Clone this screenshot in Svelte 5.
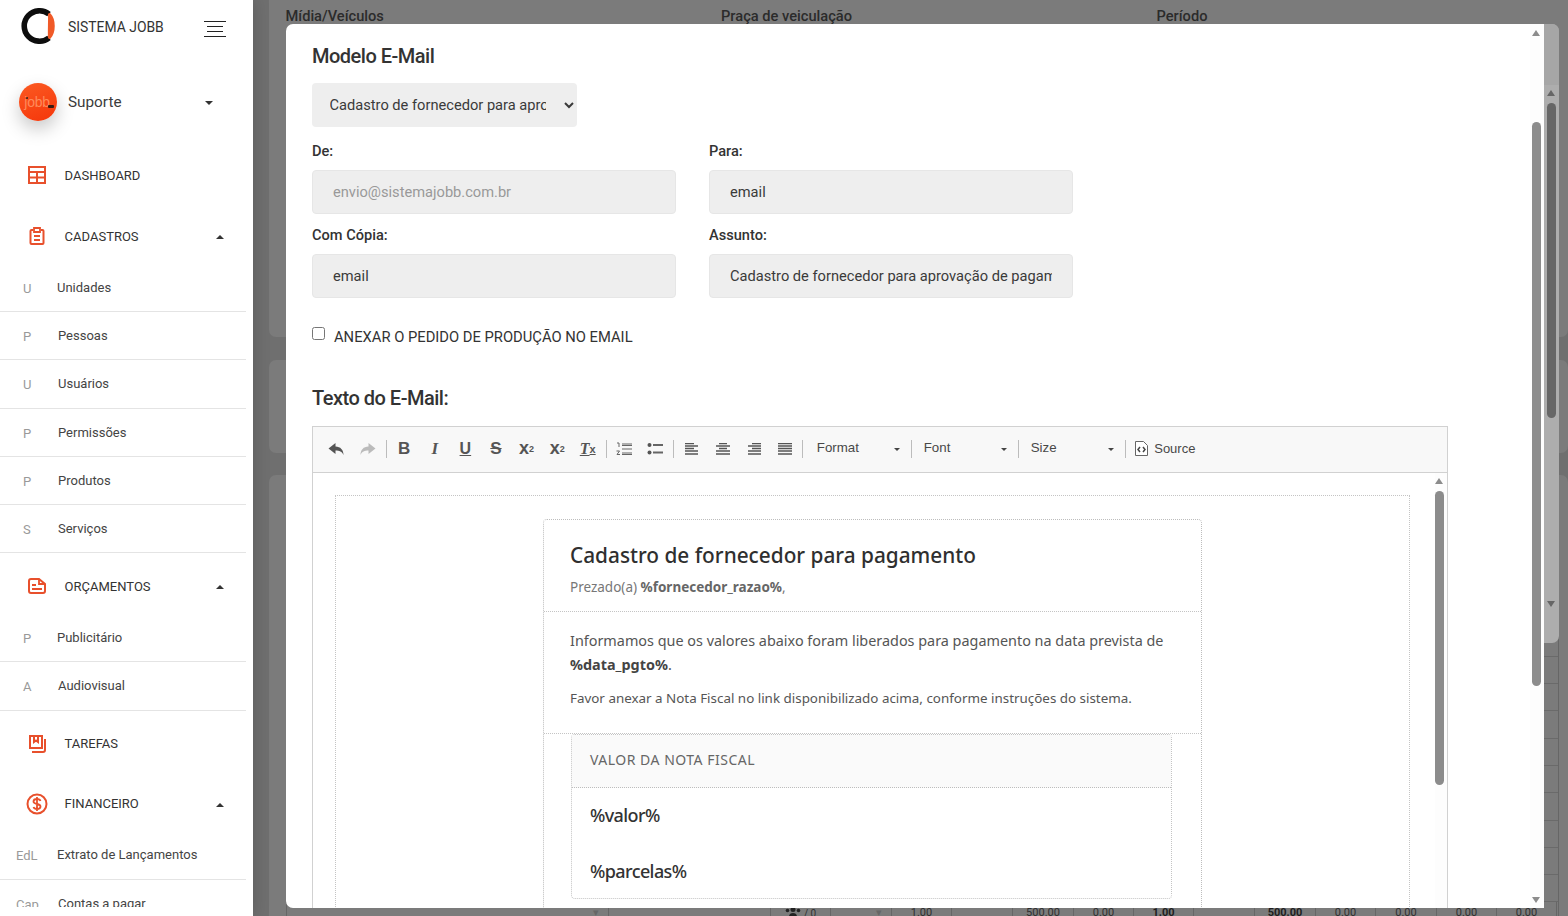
<script>
  const cadastros = [['U','Unidades',57],['P','Pessoas',58],['U','Usuários',58],['P','Permissões',58],['P','Produtos',58],['S','Serviços',58]];
  const tableRows = Array.from({ length: 15 });
  const lastCells = [
    ['▾', 322], ['', 162], ['👥', 60], ['▾', 61], ['1.00', 60], ['', 61], ['500.00', 61], ['0.00', 60], ['1.00', 60], ['', 61], ['500.00', 61], ['0.00', 60], ['0.00', 61], ['0.00', 60], ['0.00', 60]
  ];
</script>

<div class="stage">
  <aside class="sidebar">
    <div class="brand">
      <svg class="logo" viewBox="0 0 36 36" width="36" height="36">
        <path d="M29 6.2A15.2 15.2 0 1 0 29 29.8" fill="none" stroke="#0d0d0d" stroke-width="5.6"/>
        <path d="M29.5 6.5C34.5 12 34.5 24 29.5 29.5C29 24 29.8 12 29.5 6.5Z" fill="#f05a28" stroke="#f05a28" stroke-width="3" stroke-linejoin="round"/>
      </svg>
      <span class="brand-name">SISTEMA JOBB</span>
      <svg class="burger" viewBox="0 0 22 16" width="22" height="16">
        <path d="M0 .5h22M3 5.5h16M3 10.5h16M0 15.5h22" stroke="#222" stroke-width="1"/>
      </svg>
    </div>

    <div class="user">
      <div class="avatar"><i></i><span>jobb</span><b></b></div>
      <span class="user-name">Suporte</span>
      <span class="caret down user-caret"></span>
    </div>

    <nav>
      <div class="head">
        <svg viewBox="0 0 18 18" width="18" height="18"><path d="M1 1h16v16H1zM1 6h16M1 11.5h16M9 6v11" fill="none" stroke="#e8502c" stroke-width="2"/></svg>
        <span>DASHBOARD</span>
      </div>
      <div class="head">
        <svg viewBox="0 0 18 18" width="18" height="18"><path d="M5 3H3.500A1 1 0 0 0 2.500 4v12a1 1 0 0 0 1 1h11a1 1 0 0 0 1-1V4a1 1 0 0 0-1-1H13" fill="none" stroke="#e8502c" stroke-width="2"/><path d="M6 1h6v4H6zM6 9h6M6 13h6" fill="none" stroke="#e8502c" stroke-width="1.800"/></svg>
        <span>CADASTROS</span><span class="caret up"></span>
      </div>
      {#each cadastros as [l, name, x], i}
        <div class="sub" class:lead={i === 0}><em>{l}</em><span class:alt={x === 58}>{name}</span></div>
      {/each}
      <div class="head after">
        <svg viewBox="0 0 18 18" width="18" height="18"><path d="M1 4a2 2 0 0 1 2-2h8l6 5v7a2 2 0 0 1-2 2H3a2 2 0 0 1-2-2z" fill="none" stroke="#e8502c" stroke-width="2"/><path d="M11 2v5h6M4 8h4M4 12h10" fill="none" stroke="#e8502c" stroke-width="1.800"/></svg>
        <span>ORÇAMENTOS</span><span class="caret up"></span>
      </div>
      <div class="sub lead"><em>P</em><span>Publicitário</span></div>
      <div class="sub"><em>A</em><span class="alt">Audiovisual</span></div>
      <div class="head after">
        <svg viewBox="0 0 18 18" width="18" height="18"><path d="M2 1h12v12H2zM6 1v6l2-1.500L10 7V1" fill="none" stroke="#e8502c" stroke-width="2"/><path d="M17 4v11a2 2 0 0 1-2 2H4" fill="none" stroke="#e8502c" stroke-width="2"/></svg>
        <span>TAREFAS</span>
      </div>
      <div class="head fin">
        <svg viewBox="0 0 22 22" width="22" height="22"><circle cx="11" cy="11" r="9.500" fill="none" stroke="#e8502c" stroke-width="2"/><path d="M14.500 8c-.5-1.500-2-2-3.500-2s-3.500.8-3.500 2.500c0 3.500 7 1.500 7 5 0 1.700-2 2.500-3.500 2.500s-3-.6-3.500-2M11 4v14" fill="none" stroke="#e8502c" stroke-width="1.800"/></svg>
        <span>FINANCEIRO</span><span class="caret up"></span>
      </div>
      <div class="sub tall"><em class="wide">EdL</em><span>Extrato de Lançamentos</span></div>
      <div class="sub"><em class="wide">Cap</em><span class="alt">Contas a pagar</span></div>
    </nav>
  </aside>

  <main class="main">
    <section class="card first">
      <div class="col-heads"><span>Mídia/Veículos</span><span>Praça de veiculação</span><span>Período</span></div>
    </section>
    <section class="card second"></section>
    <section class="card third">
      <div class="table">
        {#each tableRows as _}<div class="row"></div>{/each}
        <div class="row last">
          {#each lastCells as [text, w], i}
            <div class="cell" class:strong={i === 8 || i === 10} class:faint={text === '▾'} style="width:{w}px">{text === '👥' ? '' : text}{#if text === '👥'}<svg viewBox="0 0 16 10" width="16" height="10"><circle cx="8" cy="2.500" r="2.500" fill="#222"/><circle cx="2.500" cy="3.500" r="1.800" fill="#222"/><circle cx="13.500" cy="3.500" r="1.800" fill="#222"/><path d="M4 10a4 4 0 0 1 8 0z" fill="#222"/></svg><small>/ 0</small>{/if}</div>
          {/each}
        </div>
      </div>
    </section>

    <div class="outer-bar">
      <span class="seg"></span>
      <span class="tri up-tri"></span>
      <span class="thumb"></span>
      <span class="tri down-tri"></span>
    </div>

    <div class="modal">
      <div class="modal-body">
        <h2>Modelo E-Mail</h2>
        <select class="field tpl">
          <option>Cadastro de fornecedor para aprovação de pagamento</option>
        </select>
        <div class="grid">
          <label>De:<input class="field" placeholder="envio@sistemajobb.com.br" /></label>
          <label>Para:<input class="field" value="email" /></label>
          <label>Com Cópia:<input class="field" value="email" /></label>
          <label>Assunto:<input class="field" value="Cadastro de fornecedor para aprovação de pagamento" /></label>
        </div>
        <label class="check"><input type="checkbox" /><span>ANEXAR O PEDIDO DE PRODUÇÃO NO EMAIL</span></label>
        <h2 class="txt">Texto do E-Mail:</h2>

        <div class="editor">
          <div class="toolbar">
            <button class="tb"><svg viewBox="0 0 16 14" width="17" height="14"><path d="M7 1 0 6.500 7 12V8.500c4 0 6.500 1 8 4.500 0-5-3-8.500-8-8.500z" fill="#555"/></svg></button>
            <button class="tb"><svg viewBox="0 0 16 14" width="17" height="14"><path d="M9 1l7 5.500L9 12V8.500c-4 0-6.500 1-8 4.500 0-5 3-8.500 8-8.500z" fill="#bbb"/></svg></button>
            <i class="sep"></i>
            <button class="tb b">B</button>
            <button class="tb it">I</button>
            <button class="tb un">U</button>
            <button class="tb st">S</button>
            <button class="tb sc">x<sub>2</sub></button>
            <button class="tb sc">x<sup>2</sup></button>
            <button class="tb cl">T<sub>x</sub></button>
            <i class="sep"></i>
            <button class="tb"><svg viewBox="0 0 16 14" width="16" height="14"><path d="M6 2h10M6 3.500h10M6 7h10M6 11h10M6 12.500h10" stroke="#666" stroke-width="1"/><path d="M1 1h2v4M0.500 9h3L1 12.500h3" fill="none" stroke="#666" stroke-width="1"/></svg></button>
            <button class="tb"><svg viewBox="0 0 16 14" width="16" height="14"><circle cx="2.500" cy="3" r="2" fill="#555"/><circle cx="2.500" cy="10.500" r="2" fill="#555"/><path d="M6 2h10v2H6zM6 9.500h10v2H6z" fill="#666"/></svg></button>
            <i class="sep"></i>
            <button class="tb al"><svg viewBox="0 0 14 12" width="14" height="12"><path d="M0 .5h9M0 3h13M0 5.500h9M0 8h13M0 11h13" stroke="#555" stroke-width="1.600"/></svg></button>
            <button class="tb al"><svg viewBox="0 0 14 12" width="14" height="12"><path d="M3 .5h8M0 3h14M3 5.500h8M0 8h14M0 11h14" stroke="#555" stroke-width="1.600"/></svg></button>
            <button class="tb al"><svg viewBox="0 0 14 12" width="14" height="12"><path d="M5 .5h9M1 3h13M5 5.500h9M1 8h13M1 11h13" stroke="#555" stroke-width="1.600"/></svg></button>
            <button class="tb al"><svg viewBox="0 0 14 12" width="14" height="12"><path d="M0 .5h14M0 3h14M0 5.500h14M0 8h14M0 11h14" stroke="#555" stroke-width="1.600"/></svg></button>
            <i class="sep nudge"></i>
            <div class="combo wide-combo"><span>Format</span><u></u></div>
            <i class="sep"></i>
            <div class="combo"><span>Font</span><u></u></div>
            <i class="sep"></i>
            <div class="combo"><span>Size</span><u></u></div>
            <i class="sep"></i>
            <div class="source">
              <svg viewBox="0 0 13 15" width="13" height="15"><path d="M.5.500h8l4 4v10H.500z" fill="#fff" stroke="#666"/><path d="M5 6 3 8.500 5 11M8 6l2 2.500L8 11" fill="none" stroke="#444" stroke-width="1.500"/></svg>
              <span>Source</span>
            </div>
          </div>

          <div class="doc">
            <div class="outer-table">
              <div class="mail-card">
                <div class="mail-head">
                  <h3>Cadastro de fornecedor para pagamento</h3>
                  <p>Prezado(a) <b>%fornecedor_razao%</b>,</p>
                </div>
                <div class="mail-body">
                  <p class="big">Informamos que os valores abaixo foram liberados para pagamento na data prevista de <b>%data_pgto%</b>.</p>
                  <p class="small">Favor anexar a Nota Fiscal no link disponibilizado acima, conforme instruções do sistema.</p>
                </div>
                <div class="mail-table">
                  <div class="mt-head">VALOR DA NOTA FISCAL</div>
                  <div class="mt-val first-val">%valor%</div>
                  <div class="mt-val">%parcelas%</div>
                </div>
              </div>
            </div>
            <div class="doc-bar"><span class="tri up-tri g"></span><span class="thumb g"></span></div>
          </div>
        </div>
      </div>
      <div class="modal-bar"><span class="tri up-tri g"></span><span class="thumb g"></span><span class="tri down-tri g"></span></div>
    </div>
  </main>
</div>

<style>
  :global(body) { margin: 0; overflow: hidden; background: #6f6f6f; }
  * { box-sizing: border-box; }
  .stage { display: flex; width: 1568px; height: 916px; overflow: hidden; font-family: Roboto, "Liberation Sans", sans-serif; color: #333; }

  .sidebar { width: 253px; height: 916px; flex: none; background: #fff; position: relative; z-index: 2; box-shadow: 0 0 16px rgba(0,0,0,.18); }
  .brand { display: flex; align-items: center; height: 52px; padding-left: 20px; }
  .logo { flex: none; }
  .brand-name { font-size: 13.900px; margin-left: 12px; color: #333; position: relative; top: 1px; }
  .burger { margin-left: 40px; position: relative; top: 3px; }
  .user { display: flex; align-items: center; height: 38px; margin-top: 31px; padding-left: 19px; }
  .avatar { width: 38px; height: 38px; flex: none; border-radius: 50%; background: linear-gradient(160deg, #fb5a22, #f5360a); box-shadow: 0 8px 18px rgba(0,0,0,.22); position: relative; display: flex; align-items: center; justify-content: center; }
  .avatar span { color: #ff8a5a; font-size: 14px; font-weight: 500; letter-spacing: -.3px; font-family: "Liberation Sans", sans-serif; position: relative; left: -1px; }
  .avatar i { position: absolute; left: 7px; top: 14px; width: 2px; height: 2px; background: #222; border-radius: 50%; }
  .avatar b { position: absolute; right: 3px; top: 22px; width: 6px; height: 3px; background: #3a1a10; border-radius: 1px; }
  .user-name { font-size: 15.300px; margin-left: 11px; color: #3c3c3c; }
  .caret { width: 0; height: 0; border-left: 4px solid transparent; border-right: 4px solid transparent; }
  .caret.down { border-top: 4px solid #333; }
  .caret.up { border-bottom: 4px solid #333; position: absolute; left: 216px; margin-top: 2px; }
  .user-caret { margin-left: 83px; margin-top: 2px; }

  nav { height: 762px; margin-top: 24px; overflow: hidden; }
  .head { display: flex; align-items: center; height: 54px; margin-top: 7px; padding-left: 28px; font-size: 13px; color: #333; position: relative; }
  .head:first-child { margin-top: 3px; }
  .head.after { margin-top: 6px; }
  .head svg { flex: none; }
  .head > span:first-of-type { margin-left: 18.600px; }
  .fin { padding-left: 26px; margin-top: 6px; }
  .fin > span:first-of-type { margin-left: 16.600px; }
  .sub { height: 48.2px; display: flex; align-items: center; border-bottom: 1px solid #e4e4e4; margin-right: 7px; font-size: 13px; color: #444; position: relative; padding-left: 57px; }
  .sub.lead { margin-top: 1px; }
  .sub.tall { height: 49.2px; }
  .sub em { position: absolute; left: 23px; top: 17px; font-style: normal; color: #999; font-size: 13px; }
  .sub em.wide { left: 16px; }
  .sub .alt { margin-left: 1px; }

  .main { position: relative; flex: 1; height: 916px; background: #6f6f6f; overflow: hidden; }
  .card { background: #7b7b7b; margin-left: 16px; border-radius: 7px; }
  .first { height: 337px; border-radius: 0 0 7px 7px; }
  .second { height: 93px; margin-top: 23px; }
  .third { height: 480px; margin-top: 22px; padding-top: 18px; padding-left: 17px; }
  .col-heads { display: flex; padding: 8px 0 0 16.500px; font-size: 14.650px; font-weight: 500; color: #2b2b2b; line-height: 16px; }
  .col-heads span { width: 435.500px; flex: none; }
  .table { width: 1273px; border-left: 1px solid #666; border-right: 1px solid #666; }
  .row { height: 27.3px; border-bottom: 1px solid #6a6a6a; }
  .row.last { display: flex; border: 0; }
  .cell { flex: none; height: 27px; border-right: 1px solid #666; font-size: 11px; color: #2f2f2f; text-align: center; padding-top: 5px; line-height: 12px; }
  .cell small { font-size: 10px; margin-left: 3px; }
  .cell.strong { font-weight: 700; color: #1e1e1e; }
  .cell.faint { color: #666; text-align: right; padding-right: 9px; }

  .outer-bar { position: absolute; left: 1291px; top: 24px; width: 15px; height: 619px; background: #adadad; border-radius: 0 7px 7px 0; z-index: 1; display: block; }
  .outer-bar .seg { position: absolute; inset: 0 0 auto 0; height: 61px; background: #a6a6a6; border-top-right-radius: 7px; }
  .outer-bar .tri { position: absolute; left: 3px; }
  .outer-bar .up-tri { top: 66px; }
  .outer-bar .down-tri { top: 577px; }
  .outer-bar .thumb { position: absolute; left: 3px; top: 79px; width: 9px; height: 315px; border-radius: 5px; background: #666; }
  .tri { width: 0; height: 0; border-left: 4.500px solid transparent; border-right: 4.500px solid transparent; }
  .up-tri { border-bottom: 6px solid #666; }
  .down-tri { border-top: 6px solid #666; }
  .up-tri.g { border-bottom-color: #8c8c8c; }
  .down-tri.g { border-top-color: #8c8c8c; }
  .thumb.g { background: #8c8c8c; }

  .modal { position: absolute; left: 33px; top: 24px; width: 1258px; height: 884px; background: #fff; border-radius: 7px 0 0 7px; overflow: hidden; z-index: 2; }
  .modal-body { padding: 20px 0 0 26px; width: 1244px; }
  .modal-bar { position: absolute; right: 0; top: 0; width: 14px; height: 884px; background: #fdfdfd; }
  .modal-bar .tri { position: absolute; left: 2px; }
  .modal-bar .up-tri { top: 6px; }
  .modal-bar .thumb { position: absolute; left: 2px; top: 98px; width: 9px; height: 564px; border-radius: 5px; }
  .modal-bar .down-tri { top: 873px; }

  h2 { margin: 0; font-size: 20px; font-weight: 500; line-height: 24px; color: #333; letter-spacing: -.5px; }
  .field { display: block; height: 44px; border: 1px solid #e6e6e6; border-radius: 4px; background: #eee; font: 400 14.650px Roboto, sans-serif; color: #3a3a3a; padding: 0 20px; width: 364px; outline: 0; }
  .field::placeholder { color: #999; opacity: 1; }
  .tpl { width: 265px; margin-top: 15px; padding: 0 15px 0 13.500px; border: 0; }
  .grid { display: grid; grid-template-columns: 364px 364px; column-gap: 33px; row-gap: 12px; margin-top: 15px; }
  .grid label { display: block; font-size: 14.600px; font-weight: 500; line-height: 18px; color: #333; }
  .grid .field { margin-top: 10px; font-weight: 400; }
  .check { display: flex; align-items: flex-start; margin-top: 29px; font-size: 14.750px; line-height: 18px; color: #333; }
  .check input { margin: 0 9px 0 0; width: 13px; height: 13px; }
  .check span { position: relative; top: 1px; }
  .txt { margin-top: 41px; }

  .editor { width: 1136px; margin-top: 16px; border: 1px solid #d1d1d1; border-bottom: 0; }
  .toolbar { height: 46px; background: #f8f8f8; border-bottom: 1px solid #d1d1d1; display: flex; align-items: center; padding: 0 0 2px 8.700px; }
  .tb { flex: none; width: 30.600px; height: 30px; border: 0; background: none; padding: 0; display: flex; align-items: center; justify-content: center; font-family: "Liberation Sans", sans-serif; color: #555; }
  .tb.al { width: 31px; }
  .b { font-weight: 700; font-size: 17px; }
  .it { font: italic 700 17px "Liberation Serif", serif; }
  .un { font-weight: 700; font-size: 16px; text-decoration: underline; }
  .st { font-weight: 700; font-size: 17px; text-decoration: line-through; }
  .sc { font-weight: 700; font-size: 18px; }
  .sc sub, .sc sup { font-size: 9px; line-height: 0; }
  .cl { font: italic 700 16px "Liberation Serif", serif; text-decoration: underline; }
  .cl sub { font: 700 11px "Liberation Sans", sans-serif; line-height: 0; }
  .sep { flex: none; width: 1px; height: 18px; background: #bcbcbc; margin: 0 2px 0 3px; }
  .sep.nudge { margin-left: 2px; }
  .combo { flex: none; width: 101px; height: 30px; display: flex; align-items: center; padding-left: 9.500px; font: 13.300px "Liberation Sans", Arial, sans-serif; color: #484848; position: relative; }
  .combo.wide-combo { width: 103px; padding-left: 11.600px; }
  .combo span { position: relative; top: -1px; }
  .combo u { position: absolute; right: 8px; top: 14px; border-left: 3px solid transparent; border-right: 3px solid transparent; border-top: 3px solid #444; }
  .source { display: flex; align-items: center; margin-left: 7px; font: 13px "Liberation Sans", Arial, sans-serif; color: #484848; }
  .source span { margin-left: 6px; }

  .doc { position: relative; height: 440px; padding: 22px 0 0 22px; overflow: hidden; }
  .outer-table { width: 1075px; height: 500px; border: 1px dotted #c4c4c4; padding: 23px 0 0 207px; }
  .mail-card { width: 659px; border: 1px dotted #bdbdbd; border-radius: 4px; font-family: "Noto Sans", "Open Sans", sans-serif; color: #555; height: 480px; }
  .mail-head { height: 92px; padding: 19px 26px 0; border-bottom: 1px dotted #c4c4c4; }
  h3 { margin: 0; font-size: 20.800px; font-weight: 500; line-height: 32px; color: #2f2f2f; }
  .mail-head p { margin: 7px 0 0; font-size: 13.500px; line-height: 18px; color: #777; }
  .mail-head b { color: #666; }
  .mail-body { height: 122px; padding: 17px 26px 0; border-bottom: 1px dotted #c4c4c4; }
  .big { margin: 0; font-size: 14.400px; line-height: 24px; color: #555; }
  .big b { color: #444; }
  .small { margin: 12px 0 0; font-size: 13.400px; line-height: 18px; color: #555; }
  .mail-table { width: 601px; height: 165px; margin: 0 0 0 27px; border: 1px dotted #c4c4c4; border-radius: 4px; }
  .mt-head { height: 53px; background: #fafafa; border-bottom: 1px dotted #bdbdbd; padding: 16px 18px 0; font-size: 14px; line-height: 18px; letter-spacing: .5px; color: #666; }
  .mt-val { height: 56px; padding: 14px 18px 0; font-size: 18px; line-height: 27px; font-weight: 500; color: #333; letter-spacing: -.6px; }
  .doc-bar { position: absolute; left: 1122px; top: 0; width: 13px; height: 440px; background: #fdfdfd; }
  .doc-bar .tri { position: absolute; left: 0; }
  .doc-bar .up-tri { top: 5px; }
  .doc-bar .thumb { position: absolute; left: 0; top: 18px; width: 9px; height: 294px; border-radius: 5px; }
</style>
